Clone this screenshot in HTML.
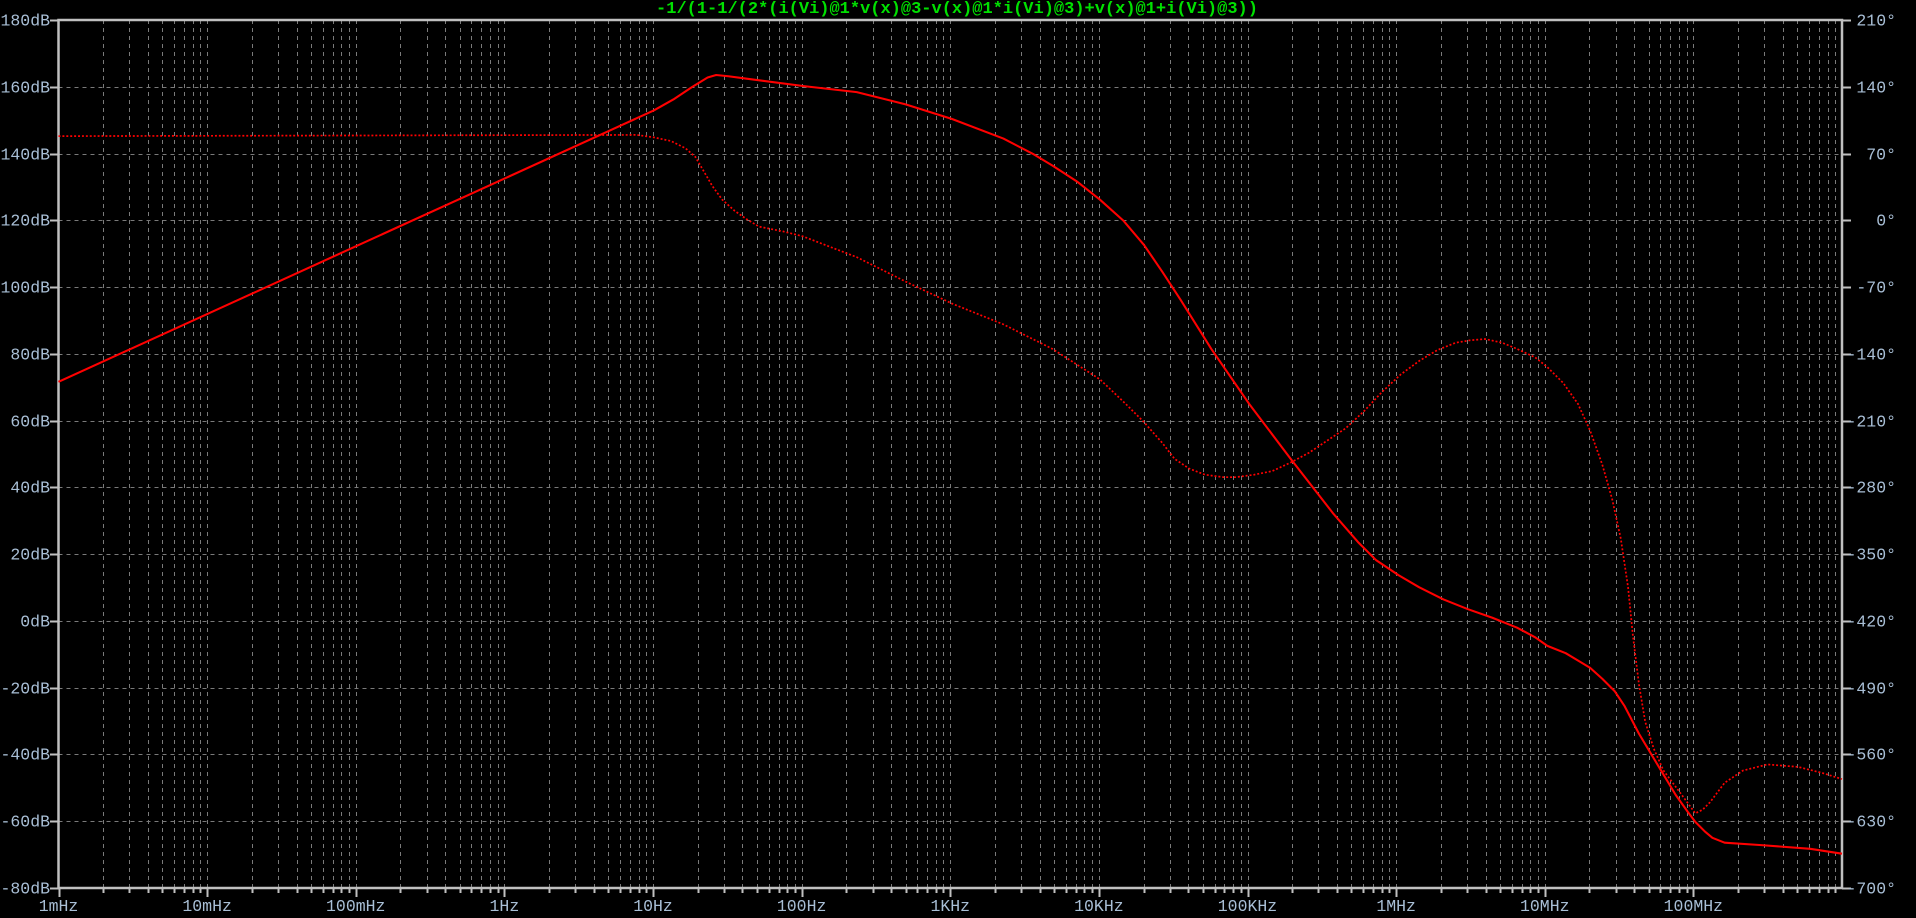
<!DOCTYPE html>
<html><head><meta charset="utf-8">
<style>
html,body{margin:0;padding:0;background:#000;width:1916px;height:918px;overflow:hidden}
svg{display:block}
text{font-family:"Liberation Mono","DejaVu Sans Mono",monospace}
</style></head><body>
<svg id="s" width="1916" height="918" viewBox="0 0 1916 918" xmlns="http://www.w3.org/2000/svg">
<rect width="1916" height="918" fill="#000"/>
<g id="grid"></g>
<g id="lbl" fill="#a9bfd6" font-size="16.5"></g>
<text x="957" y="13" fill="#00e000" font-size="17" font-weight="bold" text-anchor="middle">-1/(1-1/(2*(i(Vi)@1*v(x)@3-v(x)@1*i(Vi)@3)+v(x)@1+i(Vi)@3))</text>
<g transform="translate(58.5,20) scale(1.2224) translate(-47,-16)" fill="none" stroke="#ff0000">
<polyline stroke-width="1.7" stroke-linejoin="round" points="47,312 534,90 550,81 565,71 578,63 585,61 595,62 610,64 656,70 700,75 740,85 778,97 820,113 845,126 860,135 880,148 899,163 918,180 935,200 950,222 965,245 990,285 1021,330 1055,375 1090,420 1110,443 1125,458 1143,470 1160,480 1180,490 1200,498 1220,505 1240,513 1255,521 1265,528 1280,534 1290,540 1300,546 1310,555 1320,565 1328,577 1340,600 1355,625 1370,650 1380,664 1386,672 1394,680 1400,685 1410,689 1440,691 1480,694 1506,698"/>
<polyline stroke-width="1.4" stroke-dasharray="1.6 1.6" points="47,111 520,110 534,112 548,115 560,121 568,128 575,140 582,152 590,163 600,172 610,179 620,185 640,189 656,193 700,210 740,230 778,248 820,265 860,285 899,310 920,330 935,345 950,362 960,375 972,383 985,388 1000,390 1010,390 1025,388 1040,385 1055,378 1070,370 1085,360 1100,350 1115,336 1130,320 1145,306 1160,295 1175,286 1190,280 1202,278 1214,277 1228,280 1240,285 1255,292 1265,300 1278,313 1290,330 1300,352 1310,380 1318,408 1325,440 1331,480 1335,520 1340,560 1345,590 1352,612 1360,630 1375,650 1386,665 1392,662 1398,656 1410,640 1425,630 1445,625 1470,627 1490,632 1506,637"/>
</g>
</svg>
<script>
var NS="http://www.w3.org/2000/svg",g=document.getElementById("grid"),L=document.getElementById("lbl");
function el(p,t,a,tx){var e=document.createElementNS(NS,t);for(var k in a)e.setAttribute(k,a[k]);if(tx!==undefined)e.textContent=tx;p.appendChild(e);return e;}
var X0=58.5,X1=1842,Y0=20,Y1=888,D=(X1-X0)/12,H=(Y1-Y0)/13;
var fl=["1mHz","10mHz","100mHz","1Hz","10Hz","100Hz","1KHz","10KHz","100KHz","1MHz","10MHz","100MHz"];
for(var d=0;d<12;d++){
 for(var k=1;k<=9;k++){
  var x=Math.round(X0+d*D+Math.log10(k)*D)+0.5;
  if(!(d==0&&k==1)){
   el(g,"line",{x1:x,y1:Y0,x2:x,y2:Y1,stroke:"#7a7a7a","stroke-width":1,"stroke-dasharray":"4 4"});
  }
  el(g,"line",{x1:x,y1:Y1,x2:x,y2:Y1+(k==1?9:5),stroke:"#c0c0c0","stroke-width":2});
 }
 el(L,"text",{x:X0+d*D,y:911,"text-anchor":"middle"},fl[d]);
}
for(var i=0;i<=13;i++){
 var y=Math.round(Y0+i*H)+0.5;
 if(i>0&&i<13)el(g,"line",{x1:X0,y1:y,x2:X1,y2:y,stroke:"#7a7a7a","stroke-width":1,"stroke-dasharray":"4 4"});
 el(g,"line",{x1:50,y1:y,x2:X0,y2:y,stroke:"#c0c0c0","stroke-width":2});
 el(g,"line",{x1:X1,y1:y,x2:X1+9,y2:y,stroke:"#c0c0c0","stroke-width":2});
 el(L,"text",{x:50,y:y+5,"text-anchor":"end"},(180-20*i)+"dB");
 var p=210-70*i;
 el(L,"text",{x:1896,y:y+5,"text-anchor":"end"},p+"\u00b0");
}
el(g,"rect",{x:X0,y:Y0,width:X1-X0,height:Y1-Y0,fill:"none",stroke:"#c0c0c0","stroke-width":2.5});
</script>
</body></html>
